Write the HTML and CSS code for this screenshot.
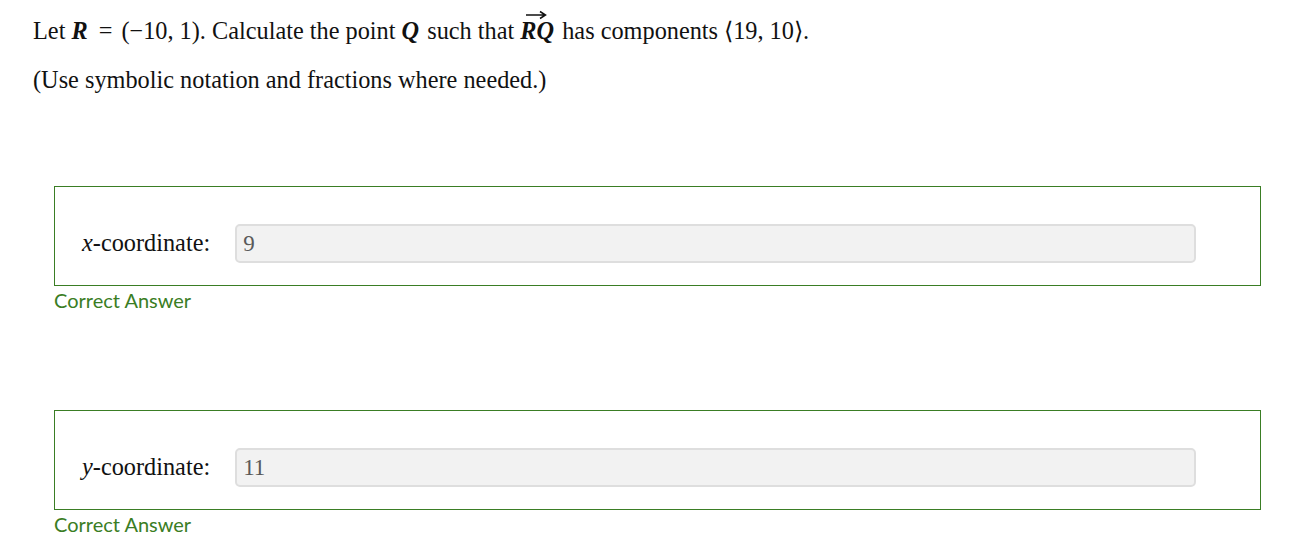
FILE: index.html
```html
<!DOCTYPE html>
<html>
<head>
<meta charset="utf-8">
<link rel="stylesheet" href="styles.css">
</head>
<body>
<div class="page">
  <p class="q">Let <span class="mv">R</span><span class="rel">=</span>(−10, 1). Calculate the point <span class="mv q-var">Q</span> such that <span class="vec"><svg class="arrow" width="22" height="10" viewBox="0 0 22 10"><path d="M1 5H20M15 1.5L20.5 5L15 8.5" fill="none" stroke="#111" stroke-width="1.5"/></svg><span class="mv">RQ</span></span> has components ⟨19, 10⟩.</p>
  <p class="note">(Use symbolic notation and fractions where needed.)</p>

  <div class="answer first">
    <div class="box">
      <span class="label"><i>x</i>-coordinate:</span>
      <div class="input">9</div>
    </div>
    <div class="status">Correct Answer</div>
  </div>

  <div class="answer second">
    <div class="box">
      <span class="label"><i>y</i>-coordinate:</span>
      <div class="input">11</div>
    </div>
    <div class="status">Correct Answer</div>
  </div>
</div>
</body>
</html>
```

FILE: styles.css
```css
html, body {
  margin: 0;
  padding: 0;
  background: #fff;
}
.page {
  padding: 0 32px 0 33px;
  font-family: "Liberation Serif", "Times New Roman", serif;
  color: #111;
}
.q {
  margin: 0;
  padding-top: 17px;
  font-size: 24.3px;
  line-height: 28px;
  white-space: nowrap;
}
.mv {
  font-style: italic;
  font-weight: bold;
}
.q-var {
  margin-right: 2px;
}
.rel {
  margin: 0 9px 0 11px;
}
.vec {
  position: relative;
  display: inline-block;
  margin-right: 2px;
}
.arrow {
  position: absolute;
  left: 5px;
  top: -7px;
}
.note {
  margin: 21px 0 0 0;
  font-size: 24.3px;
  line-height: 28px;
}
.answer {
  margin-left: 21px;
}
.first {
  margin-top: 92px;
}
.second {
  margin-top: 96px;
}
.box {
  border: 1px solid #3a7d24;
  display: flex;
  align-items: flex-start;
  padding: 37px 64px 0 27px;
  box-sizing: border-box;
  height: 100px;
}
.label {
  font-size: 24.3px;
  line-height: 38px;
  margin-right: 25px;
  white-space: nowrap;
}
.input {
  flex: 1;
  height: 39px;
  box-sizing: border-box;
  background: #f2f2f2;
  border: 2px solid #dedede;
  border-radius: 5px;
  padding: 0 0 0 6px;
  font-size: 23px;
  line-height: 35px;
  color: #5a5a5a;
}
.status {
  font-family: Lato, "Open Sans", sans-serif;
  color: #3a7d24;
  font-size: 20px;
  line-height: 28px;
}
```
